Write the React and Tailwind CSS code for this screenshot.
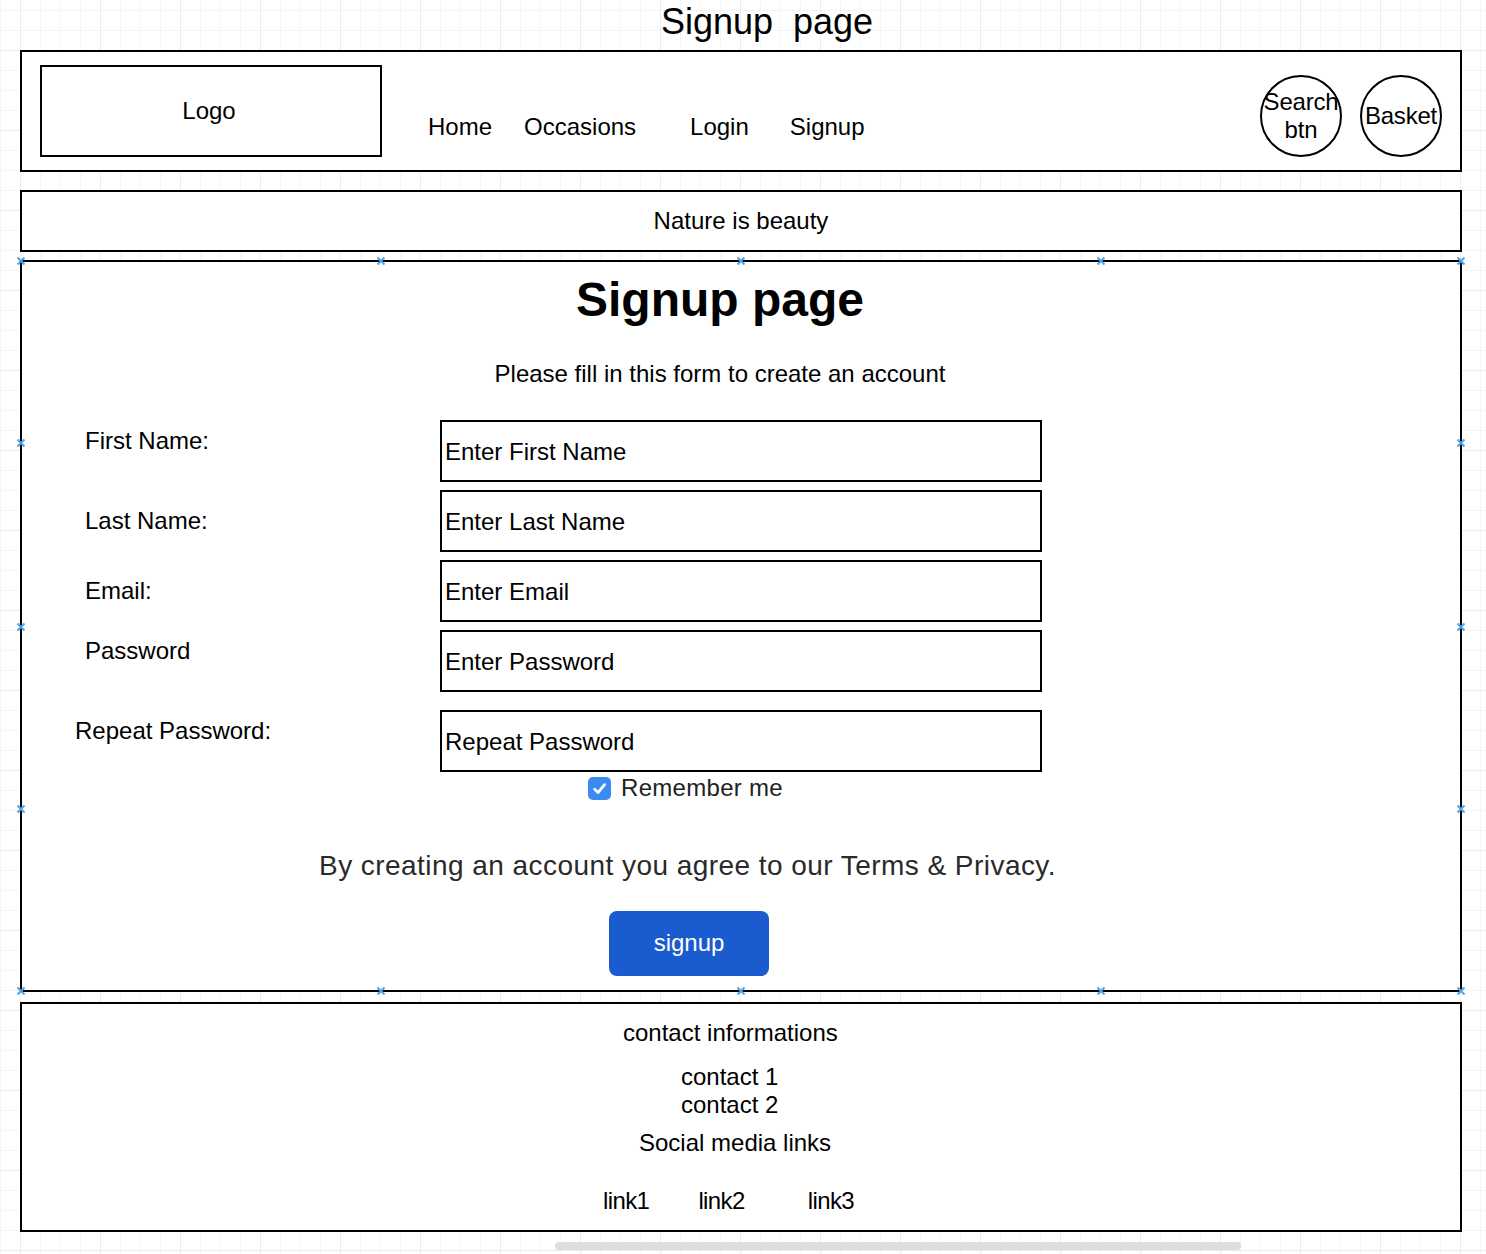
import React from 'react';

const Cross = ({ x, y }) => (
  <svg
    className="absolute w-[10px] h-[10px] -translate-x-1/2 -translate-y-1/2"
    style={{ left: x - 2, top: y - 2 }}
    viewBox="0 0 10 10"
  >
    <path d="M1.5 1.5 L8.5 8.5 M8.5 1.5 L1.5 8.5" stroke="#4ea6e6" strokeWidth="2" />
  </svg>
);

const fields = [
  { label: 'First Name:', placeholder: 'Enter First Name', lift: true },
  { label: 'Last Name:', placeholder: 'Enter Last Name' },
  { label: 'Email:', placeholder: 'Enter Email' },
  { label: 'Password', placeholder: 'Enter Password', lift: true },
];

const FormRow = ({ label, placeholder, lift, labelClass = 'pl-[63px]' }) => (
  <div className="flex h-[62px]">
    <div className={`w-[418px] flex items-center ${labelClass} ${lift ? 'pb-[20px]' : ''}`}>
      {label}
    </div>
    <div className="w-[602px] h-[62px] border-2 border-black flex items-center pl-[3px] pt-[1px]">
      {placeholder}
    </div>
  </div>
);

export default function App() {
  const crosses = [];
  [1, 361, 721, 1081, 1441].forEach((x) => {
    crosses.push({ x, y: 1 });
    crosses.push({ x, y: 731 });
  });
  [183, 367, 549].forEach((y) => {
    crosses.push({ x: 1, y });
    crosses.push({ x: 1441, y });
  });

  return (
    <div
      className="w-[1486px] h-[1254px] overflow-hidden relative text-black text-[24px] leading-[28px] bg-white bg-[image:linear-gradient(to_right,#ececec_1px,transparent_1px),linear-gradient(to_bottom,#ececec_1px,transparent_1px),linear-gradient(to_right,#f5f5f5_1px,transparent_1px),linear-gradient(to_bottom,#f5f5f5_1px,transparent_1px)] bg-[size:80px_80px,80px_80px,20px_20px,20px_20px] bg-[position:20px_0,0_50px,0_0,0_10px]"
      style={{ fontFamily: '"Liberation Sans", Arial, sans-serif' }}
    >
      {/* page title */}
      <div className="h-[50px] flex justify-center items-center pb-[6px] pl-[48px] text-[36px] leading-[40px] whitespace-pre">
        Signup  page
      </div>

      {/* header */}
      <div className="ml-[20px] w-[1442px] h-[122px] border-2 border-black bg-white flex">
        <div className="mt-[13px] ml-[18px] w-[342px] h-[92px] border-2 border-black flex items-center justify-center pr-[4px]">
          Logo
        </div>
        <div className="flex mt-[61px]">
          <span className="ml-[46px]">Home</span>
          <span className="ml-[32px]">Occasions</span>
          <span className="ml-[54px]">Login</span>
          <span className="ml-[41px]">Signup</span>
        </div>
        <div className="ml-auto mr-[18px] mt-[23px] flex gap-[18px]">
          <div className="w-[82px] h-[82px] rounded-full border-2 border-black flex flex-col items-center justify-center text-center leading-[28px] tracking-[-0.2px]">
            <span>Search</span>
            <span>btn</span>
          </div>
          <div className="w-[82px] h-[82px] rounded-full border-2 border-black flex items-center justify-center tracking-[-0.2px]">
            Basket
          </div>
        </div>
      </div>

      {/* banner */}
      <div className="ml-[20px] mt-[18px] w-[1442px] h-[62px] border-2 border-black bg-white flex items-center justify-center">
        Nature is beauty
      </div>

      {/* main form */}
      <div className="relative ml-[20px] mt-[8px] w-[1442px] h-[732px] border-2 border-black bg-white">
        <div className="w-[1396px] text-center pt-[10px]">
          <h1 className="text-[48px] leading-[56px] font-bold">Signup page</h1>
          <p className="mt-[32px]">Please fill in this form to create an account</p>
        </div>

        <div className="mt-[32px] flex flex-col gap-[8px]">
          {fields.map((f) => (
            <FormRow key={f.label} {...f} />
          ))}
          <div className="mt-[10px]">
            <FormRow label="Repeat Password:" placeholder="Repeat Password" lift labelClass="pl-[53px]" />
          </div>
        </div>

        <div className="flex items-center ml-[566px] mt-[2px] h-[28px] text-[#222]">
          <div className="w-[23px] h-[23px] rounded-[5px] bg-[#3b8af1] flex items-center justify-center">
            <svg viewBox="0 0 16 16" className="w-[17px] h-[17px]">
              <path d="M3.4 8.6 L6.6 11.8 L12.8 4.4" fill="none" stroke="white" strokeWidth="2.6" strokeLinecap="round" strokeLinejoin="round" />
            </svg>
          </div>
          <span className="ml-[10px] text-[24px] tracking-[0.3px]">Remember me</span>
        </div>

        <p className="ml-[297px] mt-[48px] text-[28px] leading-[32px] text-[#2a2a2a] tracking-[0.45px] whitespace-nowrap">
          By creating an account you agree to our Terms &amp; Privacy.
        </p>

        <button className="ml-[587px] mt-[29px] w-[160px] h-[65px] rounded-[8px] bg-[#1a5bd0] text-white text-[24px] flex items-center justify-center pb-[2px]">
          signup
        </button>

        {crosses.map((c, i) => (
          <Cross key={i} x={c.x} y={c.y} />
        ))}
      </div>

      {/* footer */}
      <div className="ml-[20px] mt-[10px] w-[1442px] h-[230px] border-2 border-black bg-white flex flex-col items-start">
        <span className="ml-[601px] mt-[15px]">contact informations</span>
        <span className="ml-[659px] mt-[16px]">contact 1</span>
        <span className="ml-[659px]">contact 2</span>
        <span className="ml-[617px] mt-[10px]">Social media links</span>
        <div className="flex mt-[30px] ml-[581px] tracking-[-0.6px]">
          <span>link1</span>
          <span className="ml-[49px]">link2</span>
          <span className="ml-[63px]">link3</span>
        </div>
      </div>

      {/* horizontal scrollbar */}
      <div className="absolute left-[555px] top-[1242px] w-[686px] h-[8px] rounded-full bg-[#dedede]" />
    </div>
  );
}
